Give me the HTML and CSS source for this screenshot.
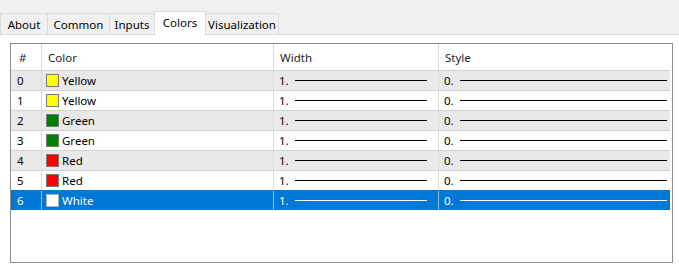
FILE: index.html
```html
<!DOCTYPE html>
<html>
<head>
<meta charset="utf-8">
<link rel="stylesheet" href="styles.css">
</head>
<body>
<div class="tabbar">
  <div class="tab w-about">About</div>
  <div class="tab w-common">Common</div>
  <div class="tab w-inputs">Inputs</div>
  <div class="tab w-colors active">Colors</div>
  <div class="tab w-vis">Visualization</div>
</div>
<div class="panel">
  <div class="grid">
    <div class="row header">
      <div class="c c-num">#</div>
      <div class="c c-color">Color</div>
      <div class="c c-width">Width</div>
      <div class="c c-style">Style</div>
    </div>
    <div class="row alt">
      <div class="c c-num">0</div>
      <div class="c c-color"><span class="sw yellow"></span>Yellow</div>
      <div class="c c-width">1.<span class="ln"></span></div>
      <div class="c c-style">0.<span class="ln"></span></div>
    </div>
    <div class="row">
      <div class="c c-num">1</div>
      <div class="c c-color"><span class="sw yellow"></span>Yellow</div>
      <div class="c c-width">1.<span class="ln"></span></div>
      <div class="c c-style">0.<span class="ln"></span></div>
    </div>
    <div class="row alt">
      <div class="c c-num">2</div>
      <div class="c c-color"><span class="sw green"></span>Green</div>
      <div class="c c-width">1.<span class="ln"></span></div>
      <div class="c c-style">0.<span class="ln"></span></div>
    </div>
    <div class="row">
      <div class="c c-num">3</div>
      <div class="c c-color"><span class="sw green"></span>Green</div>
      <div class="c c-width">1.<span class="ln"></span></div>
      <div class="c c-style">0.<span class="ln"></span></div>
    </div>
    <div class="row alt">
      <div class="c c-num">4</div>
      <div class="c c-color"><span class="sw red"></span>Red</div>
      <div class="c c-width">1.<span class="ln"></span></div>
      <div class="c c-style">0.<span class="ln"></span></div>
    </div>
    <div class="row">
      <div class="c c-num">5</div>
      <div class="c c-color"><span class="sw red"></span>Red</div>
      <div class="c c-width">1.<span class="ln"></span></div>
      <div class="c c-style">0.<span class="ln"></span></div>
    </div>
    <div class="row sel">
      <div class="c c-num">6</div>
      <div class="c c-color"><span class="sw white"></span>White</div>
      <div class="c c-width">1.<span class="ln"></span></div>
      <div class="c c-style">0.<span class="ln"></span></div>
    </div>
  </div>
</div>
</body>
</html>
```
FILE: styles.css
```css
html, body {
  margin: 0;
  padding: 0;
  background: #ffffff;
  font-family: "Segoe UI", "Noto Sans", "Open Sans", sans-serif;
  font-size: 11.5px;
  color: #000;
}
.tabbar {
  height: 34px;
  background: #f0f0f0;
  border-bottom: 1px solid #dadada;
  display: flex;
  align-items: flex-end;
  box-sizing: content-box;
}
.tab {
  box-sizing: border-box;
  height: 21px;
  border: 1px solid #dadada;
  border-bottom: none;
  margin-right: -1px;
  display: flex;
  align-items: center;
  justify-content: center;
  color: #000;
  background: #f0f0f0;
  padding-top: 1px;
}
.tab.active {
  height: 24px;
  background: #ffffff;
  margin-bottom: -1px;
  padding-top: 0;
  padding-bottom: 3px;
}
.w-about { width: 48px; }
.w-common { width: 63px; }
.w-inputs { width: 46px; }
.w-colors { width: 52px; }
.w-vis { width: 74px; }

.panel {
  padding: 8px 6px 0 10px;
}
.grid {
  box-sizing: border-box;
  height: 220px;
  border: 1px solid #8c8c8c;
  padding-right: 2px;
}
.row {
  display: flex;
  height: 20px;
  box-sizing: border-box;
  border-top: 1px solid #d2d2d2;
  align-items: stretch;
}
.row.header {
  height: 26px;
  border-top: none;
  color: #1e1e1e;
}
.row.alt { background: #e9e9e9; }
.row.sel {
  background: #0078d7;
  color: #ffffff;
  border-top-color: #0078d7;
}
.c {
  box-sizing: border-box;
  display: flex;
  align-items: center;
  border-right: 1px solid #dcdcdc;
  white-space: nowrap;
}
.row.sel .c { border-right-color: #8fbde6; }
.c-num { width: 31px; padding-left: 6px; }
.c-color { width: 232px; padding-left: 4px; }
.c-width { width: 165px; padding-left: 5px; padding-right: 11px; }
.c-style { flex: 1; padding-left: 5px; padding-right: 3px; border-right: none; }
.header .c-num { padding-left: 8px; }
.header .c-color { padding-left: 6px; }
.header .c-width { padding-left: 6px; }
.header .c-style { padding-left: 6px; }
.sw {
  display: inline-block;
  width: 13px;
  height: 13px;
  box-sizing: border-box;
  border: 1px solid #7a7a7a;
  margin-right: 3px;
  flex: none;
}
.yellow { background: #ffff00; }
.green { background: #008000; }
.red { background: #ff0000; }
.white { background: #ffffff; border-color: #b0b0b0; }
.ln {
  flex: 1;
  height: 1px;
  background: #000;
  margin-left: 6px;
}
.row.sel .ln { background: #ffffff; }
```
